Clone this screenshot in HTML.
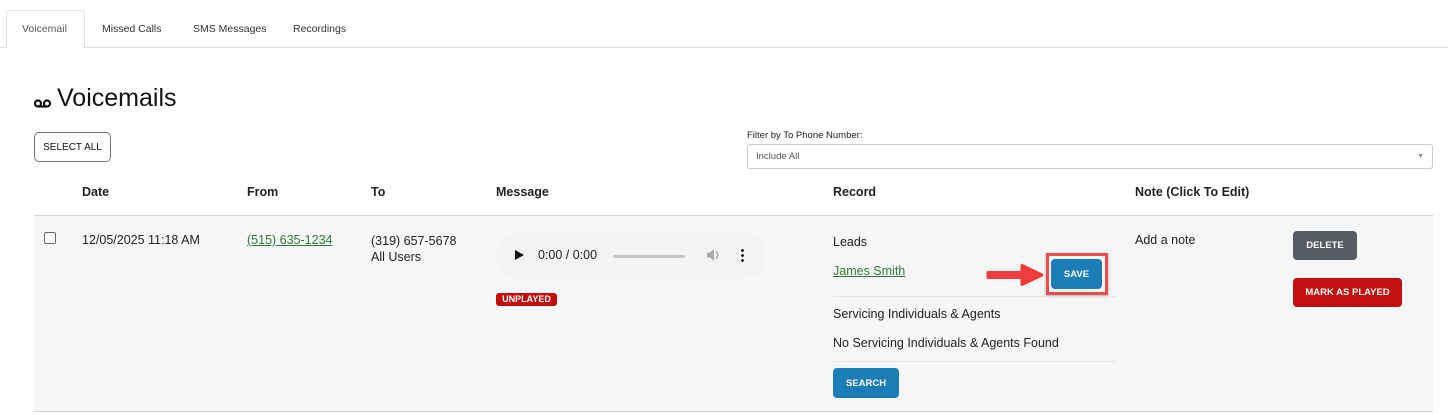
<!DOCTYPE html>
<html><head><style>
*{box-sizing:border-box;margin:0;padding:0}
body{width:1448px;height:414px;background:#fff;font-family:"Liberation Sans",sans-serif;color:#222;position:relative;overflow:hidden}
.a{position:absolute;white-space:nowrap}
.tab{font-size:10.5px;color:#333;top:23px}
.th{font-size:12.5px;font-weight:bold;top:185px;color:#222}
.td{font-size:12.5px;color:#222}
.lnk{color:#2e7d32;text-decoration:underline}
.btn{position:absolute;color:#fff;font-size:9.5px;font-weight:bold;border-radius:4px;text-align:center}
</style></head><body>
<div class="a" style="left:0;top:47px;width:1448px;height:1px;background:#dee2e6"></div>
<div class="a" style="left:6px;top:10px;width:79px;height:38px;border:1px solid #dee2e6;border-bottom:none;border-radius:4px 4px 0 0;background:#fff"></div>
<div class="a tab" style="left:22px;color:#555">Voicemail</div>
<div class="a tab" style="left:102px">Missed Calls</div>
<div class="a tab" style="left:193px">SMS Messages</div>
<div class="a tab" style="left:293px">Recordings</div>
<div class="a" style="left:34px;top:95px;width:18px;height:9px">
<svg width="18" height="9" viewBox="0 0 18 9"><circle cx="4" cy="4.5" r="3" fill="none" stroke="#111" stroke-width="2.2"/><circle cx="13" cy="4.5" r="3" fill="none" stroke="#111" stroke-width="2.2"/><rect x="4" y="6.4" width="9" height="2.2" fill="#111"/></svg></div>
<div class="a" style="left:57px;top:84px;font-size:25px;color:#111">Voicemails</div>
<div class="a" style="left:34px;top:132px;width:77px;height:30px;border:1px solid #6c757d;border-radius:5px;font-size:10px;text-align:center;line-height:30px;color:#111">SELECT ALL</div>
<div class="a" style="left:747px;top:130px;font-size:9.5px;color:#222">Filter by To Phone Number:</div>
<div class="a" style="left:747px;top:144px;width:686px;height:25px;border:1px solid #ccc;border-radius:3px;font-size:9.5px;color:#555;line-height:24px;padding-left:8px">Include All<span style="position:absolute;right:8px;font-size:7px;color:#888">▼</span></div>
<div class="a th" style="left:82px">Date</div>
<div class="a th" style="left:247px">From</div>
<div class="a th" style="left:371px">To</div>
<div class="a th" style="left:496px">Message</div>
<div class="a th" style="left:833px">Record</div>
<div class="a th" style="left:1135px">Note (Click To Edit)</div>
<div class="a" style="left:34px;top:215px;width:1399px;height:197px;background:#f5f6f8;border-top:1px solid #cfd3d8;border-bottom:1px solid #cfd3d8"></div>
<div class="a" style="left:44px;top:232px;width:12px;height:12px;border:1px solid #666;border-radius:2px;background:#fff"></div>
<div class="a td" style="left:82px;top:233px">12/05/2025 11:18 AM</div>
<div class="a td lnk" style="left:247px;top:233px">(515) 635-1234</div>
<div class="a td" style="left:371px;top:233px;line-height:16px">(319) 657-5678<br>All Users</div>
<div class="a" style="left:496px;top:231px;width:270px;height:48px;border-radius:24px;background:#f1f3f4"></div>
<div class="a" style="left:515px;top:250px;width:0;height:0;border-left:9px solid #111;border-top:5.5px solid transparent;border-bottom:5.5px solid transparent"></div>
<div class="a" style="left:538px;top:248px;font-size:12.5px;color:#222">0:00 / 0:00</div>
<div class="a" style="left:613px;top:255px;width:72px;height:3px;background:#c4c4c4;border-radius:2px"></div>
<div class="a" style="left:706px;top:248px"><svg width="16" height="14" viewBox="0 0 16 14"><path d="M1 4.5h3l4-3.5v12l-4-3.5H1z" fill="#aaa"/><path d="M10 3.5a4.5 4.5 0 0 1 0 7" stroke="#aaa" stroke-width="1.6" fill="none"/></svg></div>
<div class="a" style="left:741px;top:248px;width:3px;height:14px;background:radial-gradient(circle,#111 1.3px,transparent 1.5px) 0 0/3px 5px"></div>
<div class="a" style="left:496px;top:293px;width:61px;height:13px;background:#c40d0d;border-radius:3px;color:#fff;font-size:9px;font-weight:bold;text-align:center;line-height:13px">UNPLAYED</div>
<div class="a td" style="left:833px;top:235px">Leads</div>
<div class="a td lnk" style="left:833px;top:264px">James Smith</div>
<div class="a" style="left:1046px;top:253px;width:62px;height:42px;border:3px solid #ef4b4b;box-shadow:0 1px 3px rgba(0,0,0,.3)"></div>
<div class="btn" style="left:1051px;top:259px;width:51px;height:30px;line-height:31px;background:#1a7db7">SAVE</div>
<svg class="a" style="left:984px;top:262px" width="64" height="26" viewBox="0 0 64 26"><path d="M4 10.5h34v-7l20 9.5-20 9.5v-7H4z" fill="#ef3b3b" stroke="#ef3b3b" stroke-linejoin="round" stroke-width="3"/></svg>
<div class="a" style="left:833px;top:296px;width:283px;height:1px;background:#e3e5e8"></div>
<div class="a td" style="left:833px;top:307px">Servicing Individuals &amp; Agents</div>
<div class="a td" style="left:833px;top:336px">No Servicing Individuals &amp; Agents Found</div>
<div class="a" style="left:833px;top:361px;width:283px;height:1px;background:#e3e5e8"></div>
<div class="btn" style="left:833px;top:368px;width:66px;height:30px;line-height:31px;background:#1a7db7">SEARCH</div>
<div class="a td" style="left:1135px;top:233px">Add a note</div>
<div class="btn" style="left:1293px;top:231px;width:64px;height:29px;line-height:30px;background:#545b62">DELETE</div>
<div class="btn" style="left:1293px;top:278px;width:109px;height:29px;line-height:30px;background:#c40d0d">MARK AS PLAYED</div>
</body></html>
